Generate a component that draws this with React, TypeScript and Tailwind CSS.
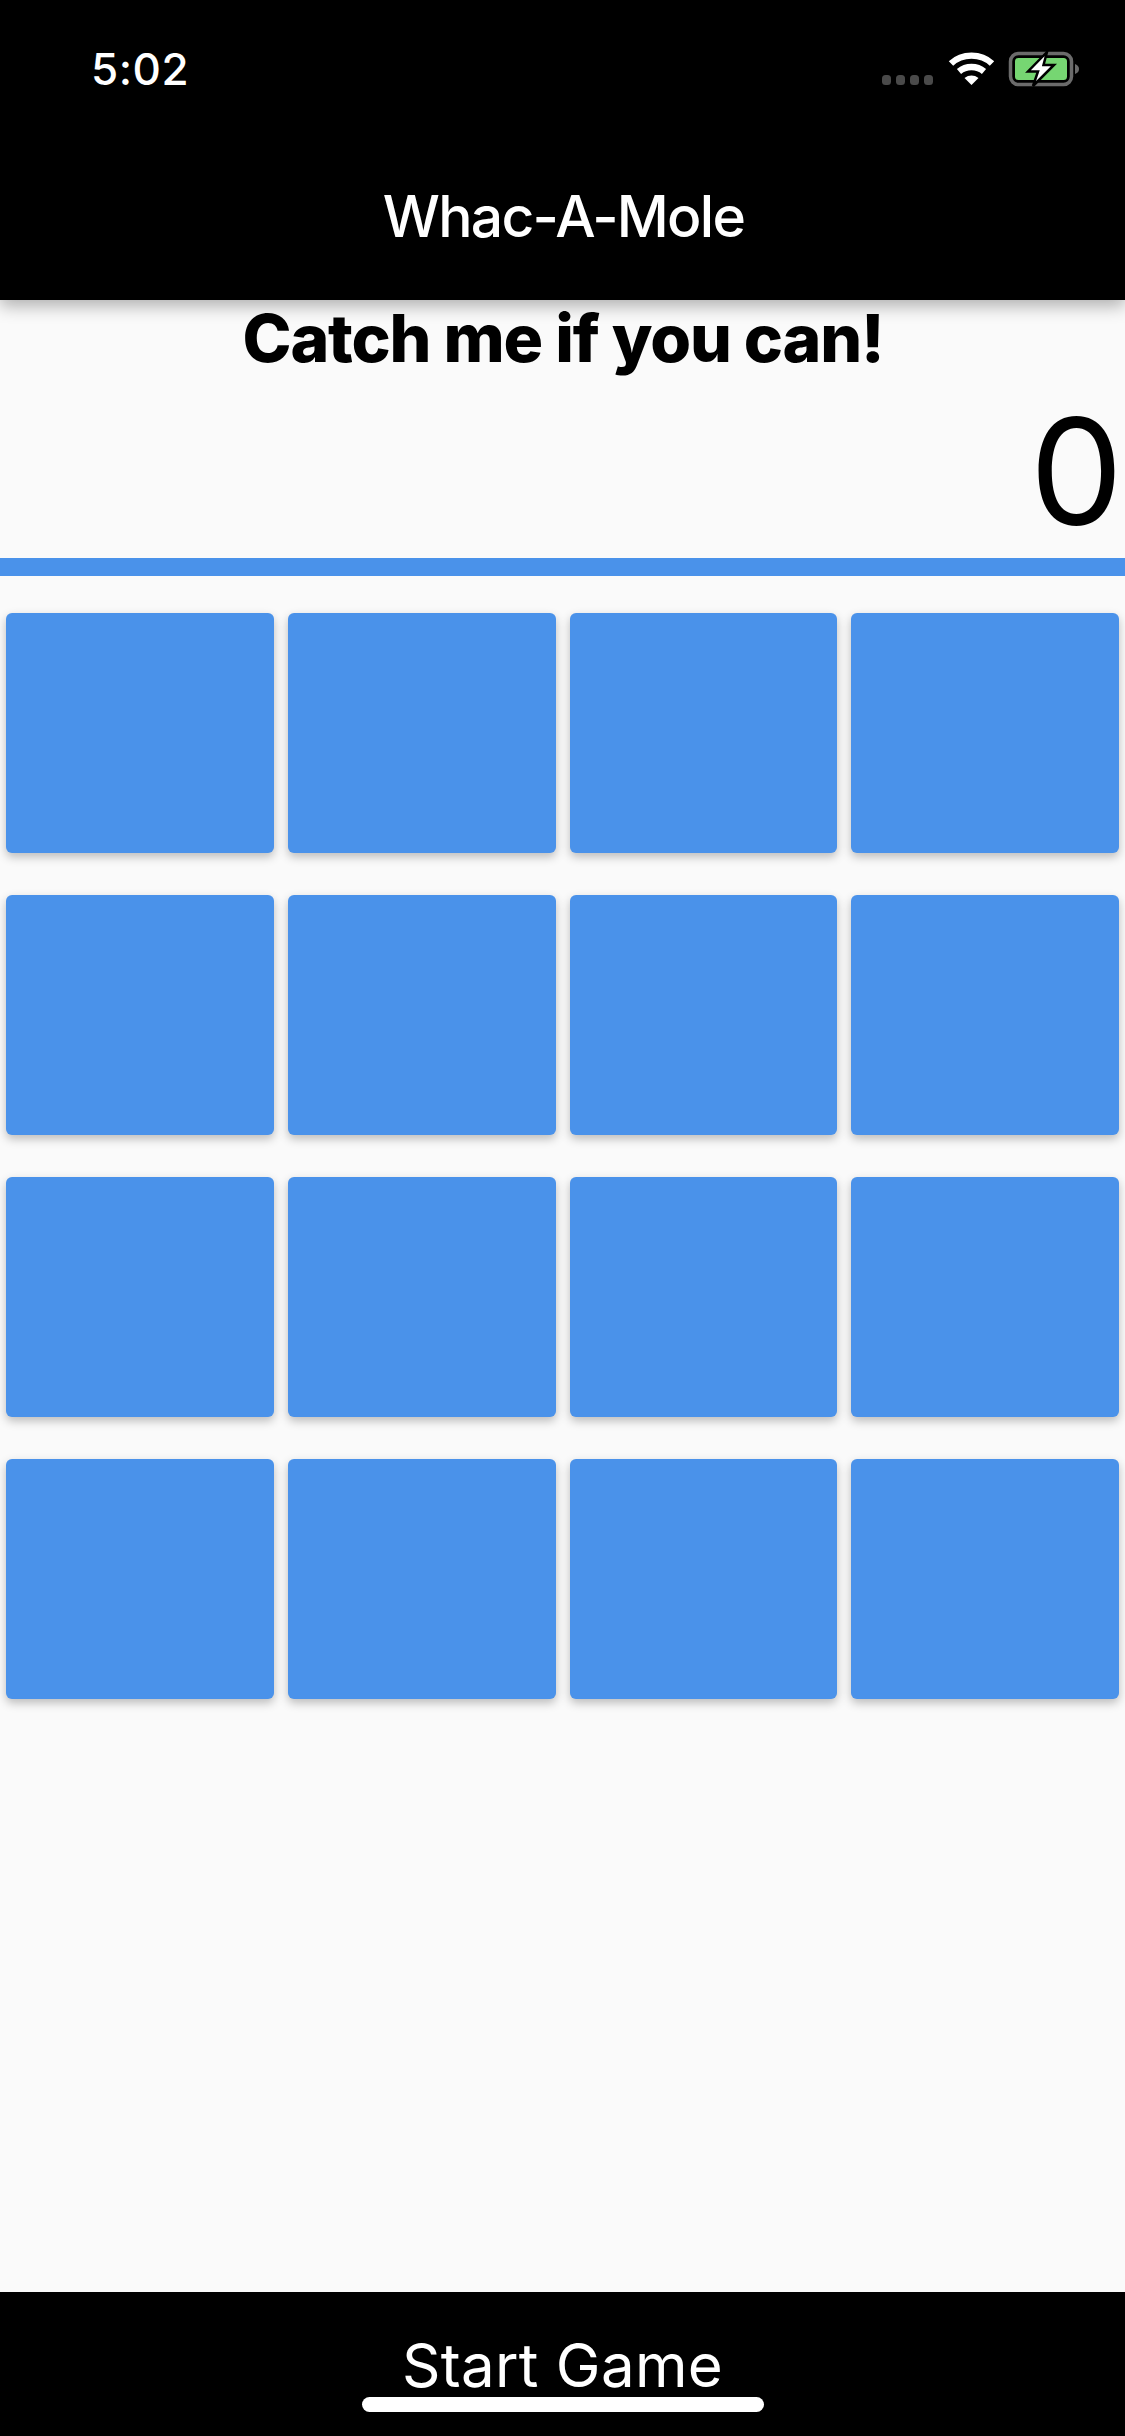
import React from "react";

const font = { fontFamily: "Inter, 'Liberation Sans', sans-serif" };

function StatusIcons() {
  return (
    <svg width="200" height="36" viewBox="0 0 200 36" fill="none">
      <g fill="#4a4a4a">
        <rect x="0" y="24" width="9" height="10" rx="3.5" />
        <rect x="14" y="24" width="9" height="10" rx="3.5" />
        <rect x="28" y="24" width="9" height="10" rx="3.5" />
        <rect x="42" y="24" width="9" height="10" rx="3.5" />
      </g>
      <g fill="none" stroke="#fff" strokeWidth="6.4">
        <path d="M69 12.5 C80 2 99 2 110 12.5" />
        <path d="M77 20.5 C84 14.5 95 14.5 102 20.5" />
      </g>
      <path d="M82.5 27 C87 23.7 92 23.7 96.5 27 L89.5 34 Z" fill="#fff" />
      <rect x="128.5" y="2.5" width="61" height="31" rx="8" stroke="#6b6b6b" strokeWidth="3.5" />
      <rect x="133" y="7" width="52" height="22" rx="3.5" fill="#76d672" />
      <path d="M193 13 C196 14 197 16 197 18 C197 20 196 22 193 23 Z" fill="#6b6b6b" />
      <path d="M165 1 L146 20.5 L156 20.5 L151 35 L172 14 L161.5 14 Z" fill="#fff" stroke="#000" strokeWidth="2.5" />
    </svg>
  );
}

export default function App() {
  const cards = Array.from({ length: 16 }, (_, i) => i);
  return (
    <div className="flex h-[2436px] w-[1125px] flex-col overflow-hidden bg-[#fafafa] text-black" style={font}>
      <header className="relative z-10 h-[300px] shrink-0 bg-black text-white shadow-[0_6px_16px_rgba(0,0,0,0.3)]">
        <div className="flex h-[182px] items-start justify-between pt-[44px] pl-[91px] pr-[43px]">
          <span className="text-[44px] font-medium leading-[50px] tracking-[0.5px]">5:02</span>
          <div className="pt-[7px]"><StatusIcons /></div>
        </div>
        <h1 className="pl-[2px] text-center text-[57px] font-medium leading-[70px] tracking-[-1.7px]">Whac-A-Mole</h1>
      </header>
      <main className="flex min-h-0 flex-1 flex-col">
        <h2 className="mt-[2px] pl-[1px] text-center text-[66px] font-extrabold leading-[72px] tracking-[-1.2px]">Catch me if you can!</h2>
        <div className="mt-[12px] h-[172px] pr-[2px] text-right text-[148px] font-normal leading-[172px]">0</div>
        <div className="h-[18px] bg-[#4a92ea]" />
        <div className="mt-[37px] grid grid-cols-4 gap-x-[14px] gap-y-[42px] px-[6px]">
          {cards.map((i) => (
            <div key={i} className="h-[240px] rounded-[6px] bg-[#4a92ea] shadow-[0_4px_10px_rgba(0,0,0,0.25)]" />
          ))}
        </div>
      </main>
      <footer className="relative flex h-[144px] shrink-0 justify-center bg-black pt-[2px]">
        <button className="text-[60px] leading-[72px] tracking-[0.3px] text-white">Start Game</button>
        <div className="absolute bottom-[24px] left-[362px] h-[15px] w-[402px] rounded-full bg-white" />
      </footer>
    </div>
  );
}
